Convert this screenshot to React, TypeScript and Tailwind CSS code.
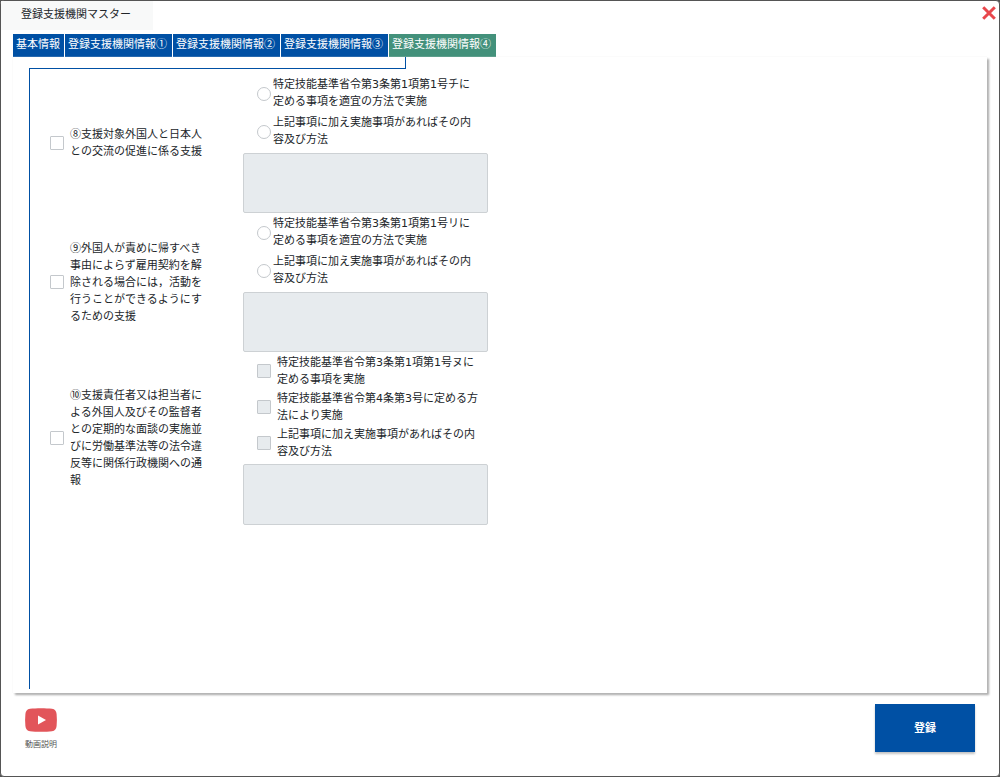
import React from 'react'

interface Choice {
    id: string
    text: string
}

interface SupportItem {
    id: string
    label: string
    kind: 'radio' | 'checkbox'
    choices: Choice[]
}

const tabs = [
    { id: 'basic', name: '基本情報' },
    { id: 'info1', name: '登録支援機関情報①' },
    { id: 'info2', name: '登録支援機関情報②' },
    { id: 'info3', name: '登録支援機関情報③' },
    { id: 'info4', name: '登録支援機関情報④' },
]

const supportItems: SupportItem[] = [
    {
        id: 'exchange',
        label: '⑧支援対象外国人と日本人との交流の促進に係る支援',
        kind: 'radio',
        choices: [
            { id: 'standard', text: '特定技能基準省令第3条第1項第1号チに定める事項を適宜の方法で実施' },
            { id: 'extra', text: '上記事項に加え実施事項があればその内容及び方法' },
        ],
    },
    {
        id: 'transfer',
        label: '⑨外国人が責めに帰すべき事由によらず雇用契約を解除される場合には，活動を行うことができるようにするための支援',
        kind: 'radio',
        choices: [
            { id: 'standard', text: '特定技能基準省令第3条第1項第1号リに定める事項を適宜の方法で実施' },
            { id: 'extra', text: '上記事項に加え実施事項があればその内容及び方法' },
        ],
    },
    {
        id: 'interview',
        label: '⑩支援責任者又は担当者による外国人及びその監督者との定期的な面談の実施並びに労働基準法等の法令違反等に関係行政機関への通報',
        kind: 'checkbox',
        choices: [
            { id: 'standard', text: '特定技能基準省令第3条第1項第1号ヌに定める事項を実施' },
            { id: 'method', text: '特定技能基準省令第4条第3号に定める方法により実施' },
            { id: 'extra', text: '上記事項に加え実施事項があればその内容及び方法' },
        ],
    },
]

const SupportRow: React.FC<{ item: SupportItem }> = ({ item }) => {
    const isRadio = item.kind === 'radio'

    return (
        <div className="flex flex-row items-center pt-px">
            <div className="flex flex-row items-center w-[193px] pb-0.5 shrink-0">
                <input
                    type="checkbox"
                    id={item.id}
                    className="w-3.5 h-3.5 bg-white border border-[#c4c8cc] rounded-[1px] appearance-none shrink-0 checked:bg-[#0050a4]"
                />
                <label htmlFor={item.id} className="ml-1.5 mb-0.5 w-[135px]">
                    {item.label}
                </label>
            </div>

            <div className="w-[245px] shrink-0 font-['DejaVu_Sans','Noto_Sans_CJK_JP',sans-serif]">
                <div className={`flex flex-col ml-3.5 pt-px ${isRadio ? 'gap-1 mb-[5px]' : 'gap-0.5 mb-1'}`}>
                    {item.choices.map((choice) => (
                        <div key={choice.id} className="flex flex-row items-center">
                            <input
                                type={item.kind}
                                id={`${item.id}-${choice.id}`}
                                name={`${item.id}-choice`}
                                disabled={!isRadio}
                                className={`w-3.5 h-3.5 border border-[#c4c8cc] appearance-none shrink-0 ${
                                    isRadio ? 'mt-0.5 rounded-full bg-white checked:bg-[#0050a4]' : 'rounded-[1px] bg-[#e7ebee]'
                                }`}
                            />
                            <label
                                htmlFor={`${item.id}-${choice.id}`}
                                className={`w-[204px] ${isRadio ? 'ml-0.5' : 'ml-1.5'}`}
                            >
                                {choice.text}
                            </label>
                        </div>
                    ))}
                </div>
                <textarea
                    disabled
                    aria-label={item.label}
                    className={`block w-full bg-[#e7ebee] border border-[#cdd1d4] rounded-[2px] resize-none ${
                        isRadio ? 'h-[60px]' : 'h-[61px]'
                    }`}
                />
            </div>
        </div>
    )
}

const App: React.FC = () => {
    const [active, setActive] = React.useState('info4')

    return (
        <div className="bg-[#555555]">
            <div className="flex flex-col min-h-screen border border-[#555555] rounded bg-white text-[11px] leading-[17px] text-[#212529] font-['Noto_Sans_CJK_JP',sans-serif]">
                <header className="flex flex-row items-start justify-between h-[33px]">
                    <h1 className="w-[152px] h-[29px] pl-5 pt-1 bg-[#f8f9f9]">登録支援機関マスター</h1>
                    <button type="button" aria-label="閉じる" className="mt-[5px] mr-[3px]">
                        <svg viewBox="0 0 14 14" className="w-3.5 h-3.5" fill="none" stroke="#e8474c" strokeWidth="3">
                            <path d="M1.2 1.2 12.8 12.8M12.8 1.2 1.2 12.8" />
                        </svg>
                    </button>
                </header>

                <nav className="flex flex-row gap-px ml-3">
                    {tabs.map((tab) => (
                        <button
                            key={tab.id}
                            type="button"
                            onClick={() => setActive(tab.id)}
                            className={`h-[23px] pl-[3px] pb-1 text-left text-white ${
                                tab.id === 'basic' ? 'w-[51px]' : 'w-[107px]'
                            } ${active === tab.id ? 'bg-[#43917b]' : 'bg-[#0050a4]'}`}
                        >
                            {tab.name}
                        </button>
                    ))}
                </nav>

                <main className="flex flex-col flex-1 ml-3 mr-3 pb-1 bg-white shadow-[0_0_1px_#e4e4e4,2px_2px_2px_#a8a8a8]">
                    <div className="ml-4 w-[377px] h-3 border-b border-r border-[#0050a4]" />
                    <div className="flex-1 ml-4 pl-5 pt-[5px] border-l border-[#0050a4]">
                        {supportItems.map((item) => (
                            <SupportRow key={item.id} item={item} />
                        ))}
                    </div>
                </main>

                <footer className="flex flex-row items-start justify-between h-[83px] pl-6 pr-6 pt-[11px]">
                    <button type="button" className="flex flex-col items-center mt-1 text-[8px] leading-[16px] text-[#555555]">
                        <svg viewBox="0 0 32 24" className="w-8 h-6">
                            <path
                                fill="#e2555a"
                                d="M5 .8C11 0 21 0 27 .8 30 1.200 31.300 3 31.600 6 32 10 32 14 31.600 18 31.300 21 30 22.800 27 23.200 21 24 11 24 5 23.200 2 22.800.7 21 .4 18 0 14 0 10 .4 6 .7 3 2 1.200 5 .8Z"
                            />
                            <path fill="#ffffff" d="M13 7.500 21 12 13 16.500Z" />
                        </svg>
                        <span className="mt-1">動画説明</span>
                    </button>
                    <button
                        type="button"
                        className="w-[100px] h-12 pb-0.5 font-bold text-white bg-[#0050a4] shadow-[0_2px_2px_#c4c4c4]"
                    >
                        登録
                    </button>
                </footer>
            </div>
        </div>
    )
}

export default App
